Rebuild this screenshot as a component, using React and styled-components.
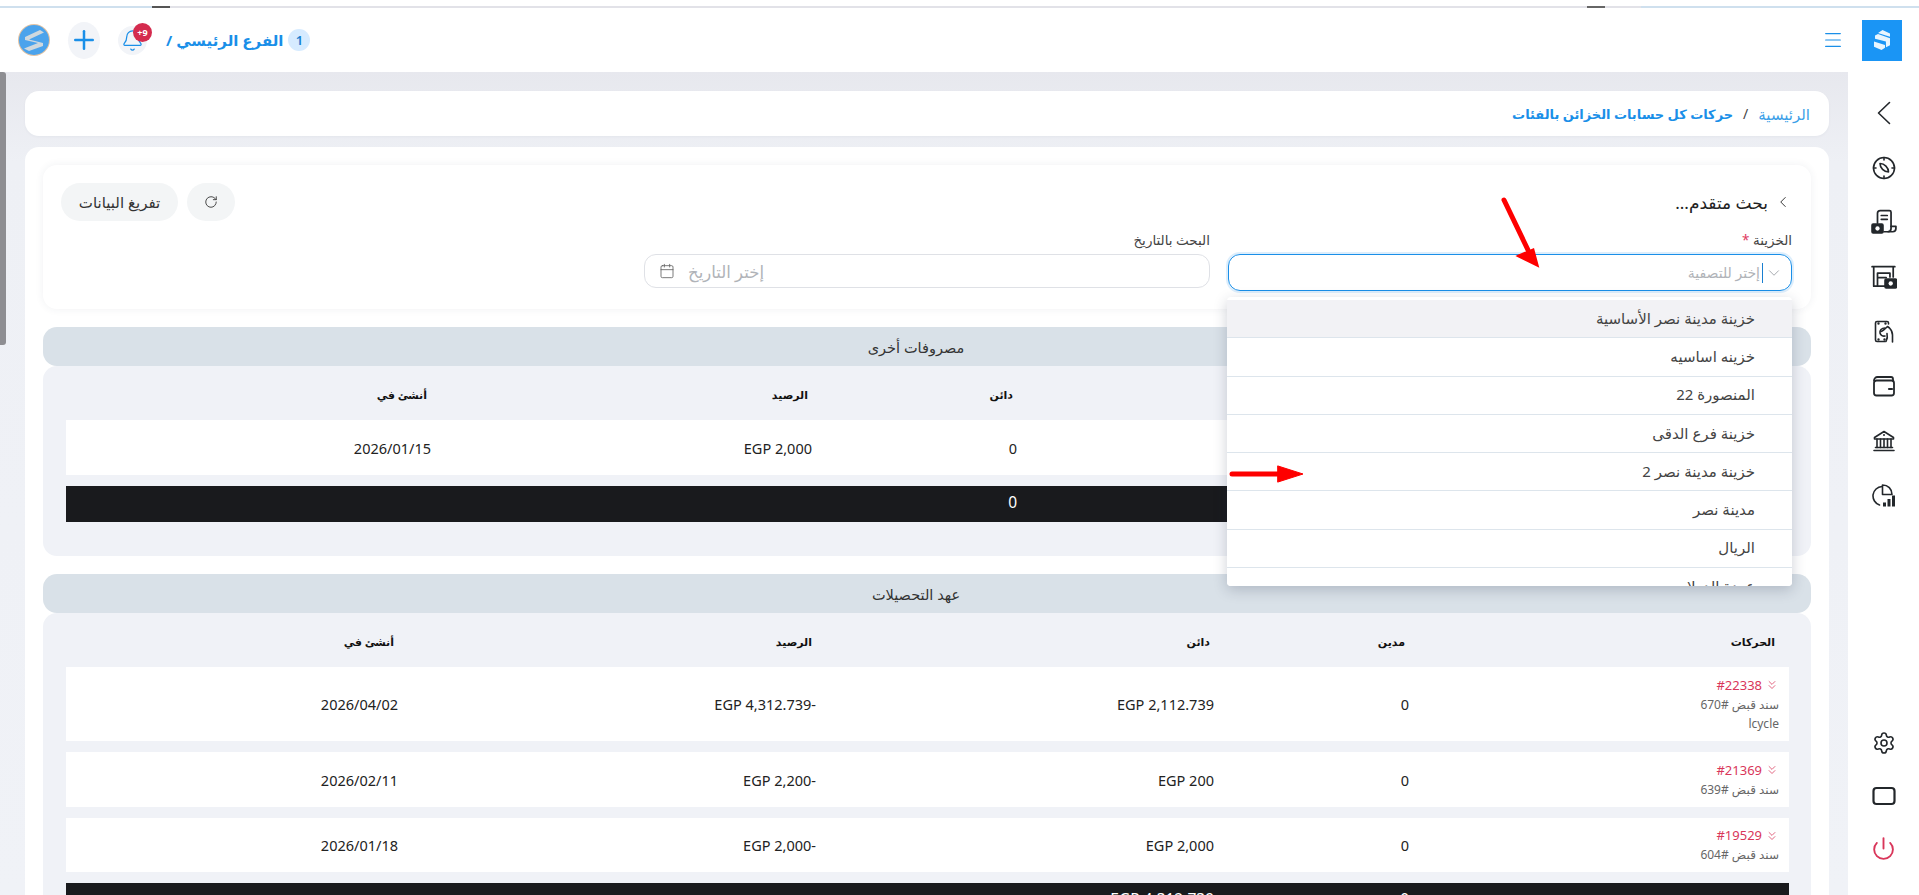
import styled, { createGlobalStyle } from "styled-components";
import { ChevronDown, ChevronLeft, ChevronsDown, Menu, Plus, Bell, Settings, Power, RotateCw, Calendar } from "lucide-react";

const GlobalStyle = createGlobalStyle`
  * { box-sizing: border-box; }
  html, body { margin: 0; height: 100%; overflow: hidden; }
  body {
    font-family: "Noto Sans", "DejaVu Sans", sans-serif;
    background: #fff;
    color: #222;
  }
`;

const branches = [
  "خزينة مدينة نصر الأساسية",
  "خزينه اساسيه",
  "المنصورة 22",
  "خزينة فرع الدقى",
  "خزينة مدينة نصر 2",
  "مدينة نصر",
  "الريال",
  "عهدة الدولار",
];

const sections = [
  {
    title: "مصروفات أخرى",
    cols: "470px 292px 205px 381px 1fr",
    rows: [{ code: "", note: [], debit: "2,000", credit: "0", balance: "EGP 2,000", date: "2026/01/15", height: 55 }],
    total: { debit: "", credit: "0", balance: "" },
  },
  {
    title: "عهد التحصيلات",
    cols: "370px 195px 398px 418px 1fr",
    rows: [
      { code: "#22338", note: ["سند قبض #670", "lcycle"], debit: "0", credit: "EGP 2,112.739", balance: "-EGP 4,312.739", date: "2026/04/02", height: 74 },
      { code: "#21369", note: ["سند قبض #639"], debit: "0", credit: "EGP 200", balance: "-EGP 2,200", date: "2026/02/11", height: 55 },
      { code: "#19529", note: ["سند قبض #604"], debit: "0", credit: "EGP 2,000", balance: "-EGP 2,000", date: "2026/01/18", height: 54 },
    ],
    total: { debit: "0", credit: "EGP 4,312.739", balance: "" },
  },
];

const Line = ({ children, size = 24, sw = 1.6 }) => (
  <svg width={size} height={size} viewBox="0 0 24 24" fill="none" stroke="#23272b" strokeWidth={sw} strokeLinecap="round" strokeLinejoin="round">
    {children}
  </svg>
);

const CompassIcon = () => (
  <Line>
    <circle cx="12" cy="12" r="10.5" />
    <path d="M12 1.500v2.500M12 20v2.500M1.500 12H4M20 12h2.500" />
    <path d="M8 7.500c4.500 0 8.500 4 8.500 8.500-4.500 0-8.500-4-8.500-8.500Z" />
  </Line>
);
const BillIcon = () => (
  <Line size={26}>
    <path d="M6 13V4a2.500 2.500 0 0 1 2.500-2.500H17a1.500 1.500 0 0 1 1.500 1.500v15a3 3 0 0 1-3 3H12" />
    <path d="M18.500 16H23v2a3 3 0 0 1-3 3h-4" />
    <path d="M9.500 6h5.500M9.500 9.500h5.500" />
    <rect x="1" y="14" width="10" height="8" rx="1" fill="#23272b" />
    <circle cx="6" cy="18" r="2" fill="#fff" stroke="none" />
  </Line>
);
const StoreIcon = () => (
  <Line size={26}>
    <path d="M1 2.500h21M2.500 2.500v18H13M20.500 2.500V12" />
    <path d="M6 20V8.500h11.500V12M6 12.500h8" />
    <rect x="13" y="14" width="10.500" height="8" rx="1" fill="#23272b" />
    <circle cx="18.200" cy="18" r="2" fill="#fff" stroke="none" />
  </Line>
);
const HandCashIcon = () => (
  <Line>
    <path d="M5 1.500h10a1.500 1.500 0 0 1 1.500 1.500v1M5 1.500A1.500 1.500 0 0 0 3.500 3v17A1.500 1.500 0 0 0 5 21.500h8" />
    <path d="M6.500 3.500h.01M13.500 3.500h.01M6.500 19.500h.01M12.500 19.500h.01" strokeWidth="2.400" />
    <path d="M13 8c-3.500 0-5.500 2.500-5 5 .5 2.500 3 3.500 5 3" />
    <path d="M9 11.500c2-.5 4.500-3 6.500-5l2 1.500c1.500 1.500 3 4 3 7v7" />
    <path d="M15 13.500c.5 2 .5 5-1 8" />
  </Line>
);
const WalletIcon = () => (
  <Line sw={1.8}>
    <path d="M2 6.500A3.500 3.500 0 0 1 5.500 3H19a2 2 0 0 1 2 2v1.500" />
    <rect x="2" y="6.500" width="20" height="15" rx="2.500" />
    <path d="M17 15h3" strokeWidth="2.200" />
  </Line>
);
const BankIcon = () => (
  <Line>
    <path d="M2.500 8.500 12 2.500l9.500 6v1.500h-19Z" />
    <path d="M12 6h.01" strokeWidth="2" />
    <path d="M5 10v8.500M8.500 10v8.500M12 10v8.500M15.500 10v8.500M19 10v8.500" />
    <path d="M3.500 18.500h17M2 21.500h20" />
  </Line>
);
const ChartIcon = () => (
  <Line>
    <path d="M10 3.500a9.500 9.500 0 0 0-2.500 18.500" />
    <path d="M10.500 2v9.500H20C20 6 16 2 10.500 2Z" />
    <path d="M12.500 19.500v4M17 16v7.500M21.500 12.500v11" strokeWidth="3" strokeLinecap="butt" />
  </Line>
);
const WindowIcon = () => (
  <Line sw={2.200}>
    <rect x="1.500" y="4" width="21" height="16" rx="3" />
  </Line>
);

const BrandMark = ({ size = 24, color = "#fff" }) => (
  <svg width={size} height={size} viewBox="0 0 24 24">
    <path fill={color} d="M12.500 2 20 5.500v3.200L8 4.900ZM5 7.500 8 6l12 4.200v7l-4 2-.1-5.600L5 10.700ZM4 13.500l11 3.600V19.800L11.500 22 4 18.700Z" opacity=".9" />
  </svg>
);

const AvatarLogo = () => (
  <svg width="32" height="32" viewBox="0 0 32 32">
    <circle cx="16" cy="16" r="16" fill="#e3c3a3" />
    <circle cx="16" cy="16" r="15" fill="#4ba3ec" />
    <path d="M7 13 22 6l4 2.500L11 15.500l14 3.500v3L11 27l-5-2.500L20 19 7 16Z" fill="#cfd8de" />
  </svg>
);

function DataSection({ section }) {
  return (
    <Section>
      <SectionHead>{section.title}</SectionHead>
      <SectionBody>
        <HeadRow $cols={section.cols}>
          <HeadCell>الحركات</HeadCell>
          <HeadCell>مدين</HeadCell>
          <HeadCell>دائن</HeadCell>
          <HeadCell>الرصيد</HeadCell>
          <HeadCell>أنشئ في</HeadCell>
        </HeadRow>
        {section.rows.map((row) => (
          <Row key={row.date} $cols={section.cols} $height={row.height}>
            <Cell>
              {row.code && (
                <Code>
                  <ChevronsDown size={14} strokeWidth={1.300} />
                  <bdi>{row.code}</bdi>
                </Code>
              )}
              {row.note.map((n) => (
                <Note key={n}>{n}</Note>
              ))}
            </Cell>
            <Cell>{row.debit}</Cell>
            <Cell>{row.credit}</Cell>
            <Cell>{row.balance}</Cell>
            <Cell>{row.date}</Cell>
          </Row>
        ))}
        <TotalRow $cols={section.cols}>
          <Cell />
          <Cell>{section.total.debit}</Cell>
          <Cell>{section.total.credit}</Cell>
          <Cell>{section.total.balance}</Cell>
          <Cell />
        </TotalRow>
      </SectionBody>
    </Section>
  );
}

export default function App() {
  return (
    <Page dir="rtl">
      <GlobalStyle />
      <TopStrip />
      <Header>
        <HeaderGroup>
          <LogoBox>
            <BrandMark />
          </LogoBox>
          <MenuButton>
            <Menu size={22} strokeWidth={1.300} />
          </MenuButton>
        </HeaderGroup>
        <HeaderGroup>
          <BranchNum>1</BranchNum>
          <BranchName>الفرع الرئيسي /</BranchName>
          <BellWrap>
            <Bell size={23} strokeWidth={1.300} />
            <Badge>+9</Badge>
          </BellWrap>
          <PlusButton>
            <Plus size={30} strokeWidth={2} />
          </PlusButton>
          <AvatarLogo />
        </HeaderGroup>
      </Header>
      <Body>
        <Sidebar>
          <SideGroup $row={54.6}>
            <SideItem>
              <svg width="14" height="24" viewBox="0 0 14 24" fill="none" stroke="#23272b" strokeWidth="1.600" strokeLinecap="round" strokeLinejoin="round">
                <path d="M12.500 1.500 1.500 12l11 10.500" />
              </svg>
            </SideItem>
            <SideItem><CompassIcon /></SideItem>
            <SideItem><BillIcon /></SideItem>
            <SideItem><StoreIcon /></SideItem>
            <SideItem><HandCashIcon /></SideItem>
            <SideItem><WalletIcon /></SideItem>
            <SideItem><BankIcon /></SideItem>
            <SideItem><ChartIcon /></SideItem>
          </SideGroup>
          <SideGroup $row={53}>
            <SideItem><Settings size={24} strokeWidth={1.600} color="#23272b" /></SideItem>
            <SideItem><WindowIcon /></SideItem>
            <SideItem><Power size={25} strokeWidth={1.800} color="#d9365a" /></SideItem>
          </SideGroup>
        </Sidebar>
        <Main>
          <ScrollThumb />
          <Breadcrumb>
            <CrumbLink>الرئيسية</CrumbLink>
            <CrumbSep>/</CrumbSep>
            <CrumbCurrent>حركات كل حسابات الخزائن بالفئات</CrumbCurrent>
          </Breadcrumb>
          <ContentCard>
            <SearchCard>
              <SearchTop>
                <SearchTitle>
                  <ChevronLeft size={18} strokeWidth={1.200} />
                  بحث متقدم...
                </SearchTitle>
                <SearchActions>
                  <PillButton $icon>
                    <RotateCw size={14} strokeWidth={1.500} />
                  </PillButton>
                  <PillButton>تفريغ البيانات</PillButton>
                </SearchActions>
              </SearchTop>
              <FieldGrid>
                <Field>
                  <FieldLabel>
                    الخزينة <Required>*</Required>
                  </FieldLabel>
                  <SelectBox>
                    <ChevronDown size={18} strokeWidth={1} color="#8a8f96" />
                    <Caret />
                    <Placeholder>إختر للتصفية</Placeholder>
                  </SelectBox>
                  <Dropdown>
                    {branches.map((b, i) => (
                      <Option key={b} $active={i === 0}>{b}</Option>
                    ))}
                  </Dropdown>
                </Field>
                <Field>
                  <FieldLabel>البحث بالتاريخ</FieldLabel>
                  <DateBox>
                    <DatePlaceholder>إختر التاريخ</DatePlaceholder>
                    <Calendar size={16} strokeWidth={1.300} color="#666" />
                  </DateBox>
                </Field>
              </FieldGrid>
            </SearchCard>
            {sections.map((s) => (
              <DataSection key={s.title} section={s} />
            ))}
          </ContentCard>
        </Main>
      </Body>
      <ArrowLayer width="1919" height="895" viewBox="0 0 1919 895">
        <g stroke="#fe0000" strokeWidth="5" strokeLinecap="round" fill="#fe0000">
          <path d="M1504 200 1528 250" />
          <path d="M1519 256 1533 250 1537 265Z" strokeWidth="3" strokeLinejoin="miter" />
          <path d="M1232 474H1282" />
          <path d="M1278 466 1303 474 1278 482Z" strokeWidth="1" />
        </g>
      </ArrowLayer>
    </Page>
  );
}

const Page = styled.div`
  position: relative;
  display: flex;
  flex-direction: column;
  width: 100vw;
  height: 100vh;
  overflow: hidden;
`;

const TopStrip = styled.div`
  height: 8px;
  flex-shrink: 0;
  background: linear-gradient(
      to right,
      #cfe0ee 0 152px,
      #555 152px 170px,
      #e2e2e8 170px 1587px,
      #666 1587px 1605px,
      #e2e2e8 1605px 1641px,
      #cfe0ee 1641px
    )
    bottom / 100% 2px no-repeat;
`;

const Header = styled.header`
  height: 64px;
  flex-shrink: 0;
  display: flex;
  justify-content: space-between;
  align-items: center;
  padding: 0 17px 0 18px;
  background: #fff;
`;

const HeaderGroup = styled.div`
  display: flex;
  align-items: center;
`;

const LogoBox = styled.div`
  width: 40px;
  height: 41px;
  background: #1a95f5;
  display: flex;
  align-items: center;
  justify-content: center;
`;

const MenuButton = styled.div`
  margin-right: 18px;
  color: #1a8fe8;
  display: flex;
`;

const BranchNum = styled.span`
  width: 22px;
  height: 22px;
  border-radius: 50%;
  background: #d6ebff;
  color: #1a7fd0;
  font-size: 13px;
  font-weight: 600;
  display: flex;
  align-items: center;
  justify-content: center;
`;

const BranchName = styled.span`
  margin-right: 5px;
  color: #1a8fe8;
  font-size: 15px;
  font-weight: 700;
  white-space: nowrap;
`;

const BellWrap = styled.div`
  position: relative;
  margin-right: 19px;
  width: 29px;
  height: 29px;
  border-radius: 50%;
  background: #f2f4f8;
  color: #1a8fe8;
  display: flex;
  align-items: center;
  justify-content: center;
`;

const Badge = styled.span`
  position: absolute;
  top: -3px;
  left: 15px;
  width: 19px;
  height: 19px;
  border-radius: 50%;
  background: #d42b4e;
  color: #fff;
  font-size: 9px;
  font-weight: 700;
  direction: ltr;
  display: flex;
  align-items: center;
  justify-content: center;
`;

const PlusButton = styled.div`
  margin: 0 18px;
  width: 32px;
  height: 37px;
  border-radius: 50%;
  background: #f2f4f8;
  color: #1a8fe8;
  display: flex;
  align-items: center;
  justify-content: center;
`;

const Body = styled.div`
  flex: 1;
  min-height: 0;
  display: flex;
`;

const Sidebar = styled.aside`
  width: 71px;
  flex-shrink: 0;
  background: #fff;
  display: flex;
  flex-direction: column;
  justify-content: space-between;
  padding: 14px 0 20px;
`;

const SideGroup = styled.div`
  display: grid;
  grid-auto-rows: ${(p) => p.$row}px;
`;

const SideItem = styled.div`
  display: flex;
  align-items: center;
  justify-content: center;
`;

const Main = styled.main`
  position: relative;
  flex: 1;
  min-width: 0;
  display: flex;
  flex-direction: column;
  gap: 11px;
  padding: 19px 19px 0 25px;
  overflow: hidden;
  background: linear-gradient(to bottom, #e7e8ee 0, #eef0f5 90px, #f0f2f7 100%);
`;

const ScrollThumb = styled.div`
  position: absolute;
  top: 0;
  left: 0;
  width: 6px;
  height: 273px;
  border-radius: 0 3px 3px 0;
  background: #8e8e92;
`;

const Breadcrumb = styled.nav`
  height: 45px;
  flex-shrink: 0;
  display: flex;
  align-items: center;
  padding: 0 19px;
  background: #fff;
  border-radius: 14px;
  box-shadow: 0 1px 3px rgba(30, 40, 70, 0.04);
`;

const CrumbLink = styled.span`
  color: #3c9fe8;
  font-size: 15px;
`;

const CrumbSep = styled.span`
  margin: 0 10px;
  color: #444;
  font-size: 14px;
`;

const CrumbCurrent = styled.span`
  color: #1a8fe8;
  font-size: 13px;
  font-weight: 700;
`;

const ContentCard = styled.div`
  flex: 1;
  min-height: 0;
  background: #fff;
  border-radius: 14px 14px 0 0;
  padding: 18px 18px 0;
  display: flex;
  flex-direction: column;
  gap: 18px;
  overflow: hidden;
`;

const SearchCard = styled.section`
  height: 144px;
  flex-shrink: 0;
  padding: 18px 19px 0 18px;
  background: #fff;
  border-radius: 14px;
  box-shadow: 0 0 8px rgba(40, 50, 80, 0.07);
`;

const SearchTop = styled.div`
  display: flex;
  justify-content: space-between;
  align-items: center;
  height: 38px;
`;

const SearchTitle = styled.h2`
  margin: 0;
  display: flex;
  align-items: center;
  gap: 6px;
  font-size: 17px;
  font-weight: 400;
  color: #222;
`;

const SearchActions = styled.div`
  display: flex;
  gap: 9px;
`;

const PillButton = styled.button`
  width: ${(p) => (p.$icon ? "48px" : "117px")};
  height: 38px;
  border: none;
  border-radius: 19px;
  background: #f3f5f6;
  color: #333;
  font-family: inherit;
  font-size: 15px;
  white-space: nowrap;
  display: flex;
  align-items: center;
  justify-content: center;
`;

const FieldGrid = styled.div`
  display: grid;
  grid-template-columns: 564px 566px;
  gap: 18px;
  margin-top: 10px;
`;

const Field = styled.div`
  position: relative;
`;

const FieldLabel = styled.label`
  display: block;
  height: 23px;
  font-size: 13.500px;
  line-height: 18px;
  color: #444;
`;

const Required = styled.span`
  color: #e0395f;
`;

const SelectBox = styled.div`
  height: 37px;
  display: flex;
  align-items: center;
  padding: 0 8px;
  gap: 2px;
  border: 1px solid #1a8fe8;
  border-radius: 12px;
  box-shadow: 0 0 0 2px rgba(26, 143, 232, 0.15);
`;

const Caret = styled.span`
  width: 1px;
  height: 20px;
  background: #1a7fd0;
`;

const Placeholder = styled.span`
  font-size: 14px;
  color: #b0b3b8;
`;

const DatePlaceholder = styled(Placeholder)`
  font-size: 16.500px;
`;

const DateBox = styled.div`
  height: 34px;
  display: flex;
  align-items: center;
  justify-content: flex-end;
  gap: 13px;
  padding: 0 14px;
  border: 1px solid #dfe1e6;
  border-radius: 12px;
`;

const Dropdown = styled.div`
  position: absolute;
  top: 66px;
  right: 0;
  left: -1px;
  height: 289px;
  padding-top: 3px;
  background: #fff;
  border-radius: 4px;
  overflow: hidden;
  box-shadow: 0 4px 14px rgba(30, 40, 70, 0.22);
  z-index: 5;
`;

const Option = styled.div`
  height: 38.300px;
  display: flex;
  align-items: center;
  padding: 0 37px 2px;
  font-size: 15px;
  color: #444;
  border-bottom: 1px solid #dde5ec;
  background: ${(p) => (p.$active ? "#f2f2f5" : "#fff")};
`;

const Section = styled.section`
  flex-shrink: 0;
`;

const SectionHead = styled.div`
  height: 39px;
  display: flex;
  align-items: center;
  justify-content: center;
  padding-right: 22px;
  background: #d9e1e8;
  border-radius: 14px;
  font-size: 14.500px;
  color: #333;
`;

const SectionBody = styled.div`
  padding: 0 22px 34px 23px;
  background: #f0f2f7;
  border-radius: 14px;
  display: flex;
  flex-direction: column;
  gap: 11px;
`;

const HeadRow = styled.div`
  height: 43px;
  display: grid;
  grid-template-columns: ${(p) => p.$cols};
  align-items: end;
`;

const HeadCell = styled.div`
  padding: 0 14px 7px 0;
  font-size: 11px;
  font-weight: 700;
  color: #111;
`;

const Row = styled.div`
  height: ${(p) => p.$height}px;
  display: grid;
  grid-template-columns: ${(p) => p.$cols};
  align-items: center;
  background: #fff;
  font-size: 14.500px;
  color: #222;
`;

const TotalRow = styled(Row)`
  height: 36px;
  padding-bottom: 4px;
  background: #191a1d;
  color: #fff;
  font-size: 15.500px;
  flex-shrink: 0;
`;

const Cell = styled.div`
  padding-right: 10px;
  white-space: nowrap;
`;

const Code = styled.div`
  display: flex;
  align-items: center;
  gap: 3px;
  font-size: 13px;
  line-height: 19px;
  color: #d9365a;
`;

const Note = styled.div`
  font-size: 12px;
  line-height: 19px;
  color: #666;
`;

const ArrowLayer = styled.svg`
  position: absolute;
  inset: 0;
  pointer-events: none;
  z-index: 10;
`;
